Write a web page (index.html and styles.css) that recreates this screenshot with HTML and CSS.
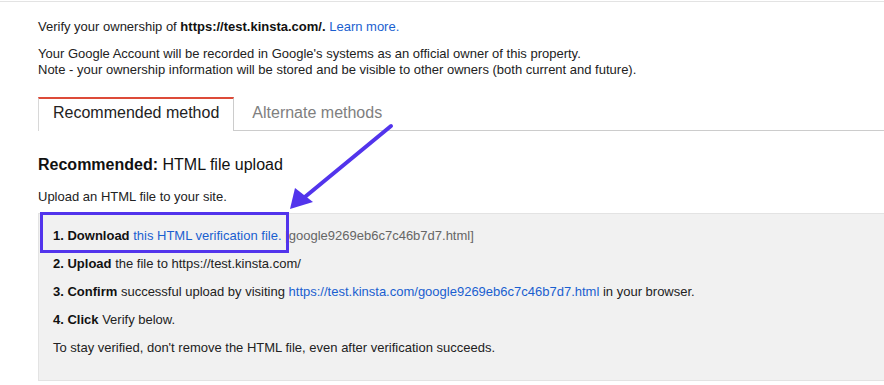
FILE: index.html
```html
<!doctype html>
<html>
<head>
	<meta charset="utf-8" />
	<title>Verify ownership</title>
	<link rel="stylesheet" href="styles.css">
</head>
<body>
	<div class="topline"></div>
	<div class="page">
		<p class="intro">Verify your ownership of <b>https://test.kinsta.com/.</b> <a href="#">Learn more.</a></p>
		<p class="note">Your Google Account will be recorded in Google's systems as an official owner of this property.<br/>Note - your ownership information will be stored and be visible to other owners (both current and future).</p>

		<div class="tabs">
			<div class="tab tab-active">Recommended method</div>
			<div class="tab">Alternate methods</div>
		</div>

		<h2 class="method-title"><b>Recommended:</b> HTML file upload</h2>
		<p class="method-desc">Upload an HTML file to your site.</p>

		<div class="steps">
			<div class="step"><b>1. Download</b> <a href="#">this HTML verification file.</a> <span class="file">[google9269eb6c7c46b7d7.html]</span></div>
			<div class="step"><b>2. Upload</b> the file to https://test.kinsta.com/</div>
			<div class="step"><b>3. Confirm</b> successful upload by visiting <a href="#">https://test.kinsta.com/google9269eb6c7c46b7d7.html</a> in your browser.</div>
			<div class="step"><b>4. Click</b> Verify below.</div>
			<div class="step">To stay verified, don't remove the HTML file, even after verification succeeds.</div>
		</div>
	</div>

	<!-- annotation drawn over the page -->
	<svg class="annotation" width="884" height="385" viewBox="0 0 884 385">
		<rect x="41.5" y="213.5" width="246" height="38" fill="none" stroke="#5234ec" stroke-width="3"/>
		<line x1="391" y1="126" x2="300" y2="201" stroke="#5234ec" stroke-width="4" stroke-linecap="round"/>
		<polygon points="290,209 295,188 313,202" fill="#5234ec"/>
	</svg>
</body>
</html>
```

FILE: styles.css
```css
body { margin: 0; font: 13px/16px Arial, "Liberation Sans", sans-serif; color: #222; background: #fff; }
a { color: #1a5fd0; text-decoration: none; }
b { font-weight: bold; color: #111; }

.topline { height: 1px; margin-top: 1px; background: #e3e3e3; }

.page { padding: 17px 0 0 38px; }
.intro { margin: 0; }
.note { margin: 11px 0 0; }

.tabs { display: flex; margin-top: 19px; border-bottom: 1px solid #ccc; }
.tab { font-size: 16px; line-height: 19px; padding: 4px 19px 8px 18px; color: #808080; border-top: 2px solid transparent; }
.tab-active { color: #222; border-top-color: #dd4b39; border-left: 1px solid #d8d8d8; border-right: 1px solid #ccc; padding: 4px 14px 8px 14px; margin-bottom: -1px; background: #fff; }

.method-title { margin: 24px 0 0; font-size: 16px; line-height: 19px; font-weight: normal; color: #111; }
.method-desc { margin: 15px 0 0; }

.steps { margin-top: 8px; background: #f1f1f1; border: 1px solid #e3e3e3; border-right: 0; padding: 14px 0 24px 14px; display: flex; flex-direction: column; gap: 12px; }
.file { color: #666; }

.annotation { position: absolute; left: 0; top: 0; pointer-events: none; }
```
